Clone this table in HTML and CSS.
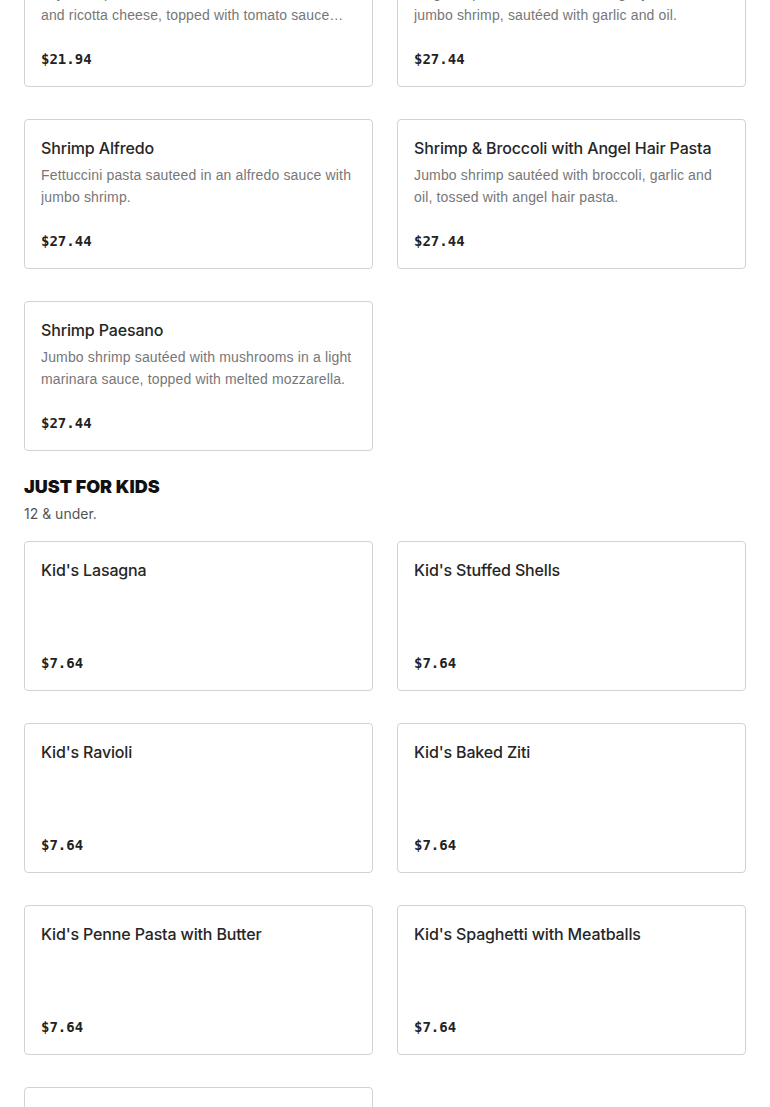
FILE: index.html
```html
<!DOCTYPE html>
<html lang="en">
<head>
<meta charset="utf-8">
<title>Menu</title>
<link rel="stylesheet" href="styles.css">
</head>
<body>
<main class="menu">
  <section class="section section--scrolled">
    <div class="grid">
      <article class="card">
        <h3 class="card-title">Baked Lasagna</h3>
        <p class="card-desc">Layers of pasta with a meat sauce, mozzarella and ricotta cheese, topped with tomato sauce and melted mozzarella cheese.</p>
        <div class="card-price">$21.94</div>
      </article>
      <article class="card">
        <h3 class="card-title">Shrimp Scampi</h3>
        <p class="card-desc">Linguine pasta tossed with our lightly breaded jumbo shrimp, sautéed with garlic and oil.</p>
        <div class="card-price">$27.44</div>
      </article>
      <article class="card">
        <h3 class="card-title">Shrimp Alfredo</h3>
        <p class="card-desc">Fettuccini pasta sauteed in an alfredo sauce with jumbo shrimp.</p>
        <div class="card-price">$27.44</div>
      </article>
      <article class="card">
        <h3 class="card-title">Shrimp &amp; Broccoli with Angel Hair Pasta</h3>
        <p class="card-desc">Jumbo shrimp sautéed with broccoli, garlic and oil, tossed with angel hair pasta.</p>
        <div class="card-price">$27.44</div>
      </article>
      <article class="card">
        <h3 class="card-title">Shrimp Paesano</h3>
        <p class="card-desc">Jumbo shrimp sautéed with mushrooms in a light marinara sauce, topped with melted mozzarella.</p>
        <div class="card-price">$27.44</div>
      </article>
    </div>
  </section>

  <section class="section">
    <header class="section-head">
      <h2 class="section-title">JUST FOR KIDS</h2>
      <p class="section-sub">12 &amp; under.</p>
    </header>
    <div class="grid">
      <article class="card">
        <h3 class="card-title">Kid's Lasagna</h3>
        <div class="card-price">$7.64</div>
      </article>
      <article class="card">
        <h3 class="card-title">Kid's Stuffed Shells</h3>
        <div class="card-price">$7.64</div>
      </article>
      <article class="card">
        <h3 class="card-title">Kid's Ravioli</h3>
        <div class="card-price">$7.64</div>
      </article>
      <article class="card">
        <h3 class="card-title">Kid's Baked Ziti</h3>
        <div class="card-price">$7.64</div>
      </article>
      <article class="card">
        <h3 class="card-title">Kid's Penne Pasta with Butter</h3>
        <div class="card-price">$7.64</div>
      </article>
      <article class="card">
        <h3 class="card-title">Kid's Spaghetti with Meatballs</h3>
        <div class="card-price">$7.64</div>
      </article>
      <article class="card">
        <h3 class="card-title">Kid's Chicken Fingers</h3>
        <div class="card-price">$7.64</div>
      </article>
    </div>
  </section>
</main>
</body>
</html>
```

FILE: styles.css
```css
* { box-sizing: border-box; }

html, body {
  margin: 0;
  padding: 0;
  background: #fff;
}

body {
  font-family: "Inter", "Liberation Sans", Arial, sans-serif;
  color: #2a2a2a;
  overflow: hidden;
}

.menu {
  padding: 0 24px;
}

.section--scrolled {
  margin-top: -63px;
}

.grid {
  display: grid;
  grid-template-columns: 1fr 1fr;
  column-gap: 24px;
  row-gap: 32px;
}

.card {
  height: 150px;
  border: 1px solid #d2d2d2;
  border-radius: 4px;
  padding: 16px 16px 17px;
  display: flex;
  flex-direction: column;
  background: #fff;
}

.card-title {
  margin: 0 0 4px;
  font-size: 16px;
  line-height: 24px;
  font-weight: 500;
  color: #262626;
  letter-spacing: -0.15px;
}

.card-desc {
  margin: 0;
  font-family: "Liberation Sans", Arial, sans-serif;
  font-size: 14px;
  line-height: 22px;
  color: #777;
  letter-spacing: 0.15px;
  display: -webkit-box;
  -webkit-line-clamp: 2;
  -webkit-box-orient: vertical;
  overflow: hidden;
}

.card-price {
  margin-top: auto;
  font-family: "DejaVu Sans Mono", "Liberation Mono", monospace;
  font-weight: bold;
  font-size: 14px;
  line-height: 20px;
  color: #222;
}

.section-head {
  padding: 24px 0 17px;
}

.section-title {
  margin: 0;
  font-family: "Inter", "Liberation Sans", Arial, sans-serif;
  font-weight: 900;
  font-size: 18px;
  line-height: 24px;
  color: #111;
  letter-spacing: 0;
}

.section-sub {
  margin: 5px 0 0;
  font-size: 14px;
  line-height: 20px;
  color: #555;
}
```
